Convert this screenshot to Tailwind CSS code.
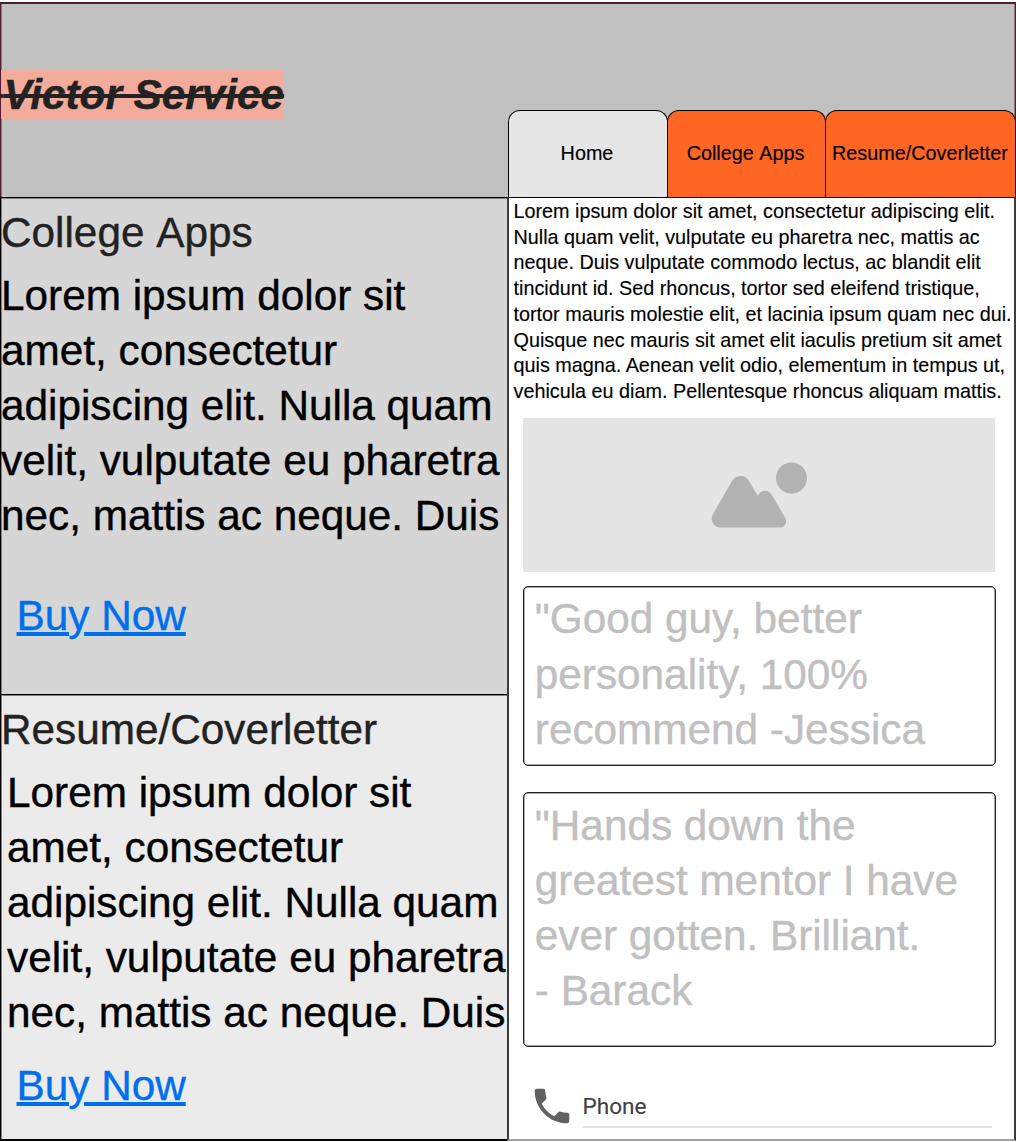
<!DOCTYPE html>
<html lang="en">
<head>
<meta charset="utf-8">
<title>Victor Service</title>
<script src="https://cdn.jsdelivr.net/npm/@tailwindcss/browser@4"></script>
</head>
<body class="w-[1016px] h-[1142px] overflow-hidden bg-white pt-[2px] font-['Liberation_Sans',Arial,sans-serif] text-[42.3px] leading-[55px] text-black [-webkit-text-stroke:0.4px]">
<header class="flex h-[195px] items-start justify-between border-x border-t-2 border-[#4f1c2e] bg-[#c0c0c0] shadow-[inset_1px_0_0_#8f7880,inset_-1px_0_0_#8f7880]">
  <h1 class="mt-[66px] h-[49px] w-[282px] whitespace-nowrap bg-[#f3ac9b] font-bold italic leading-[49px] text-[#222] line-through decoration-[4px]"><span class="tracking-[-9.2px]">&nbsp;</span>Victor Service</h1>
  <nav class="-mr-px mt-[106px] flex h-[87px] text-[19.8px] leading-[84px] [-webkit-text-stroke:0.15px]">
    <a class="w-[160px] rounded-t-[12px] border border-b-0 border-black bg-[#e6e6e6] pr-[2px] text-center">Home</a>
    <a class="-ml-px w-[159px] rounded-t-[12px] border border-b-0 border-black bg-[#ff6624] pr-[2px] text-center [font-kerning:none]">College Apps</a>
    <a class="-ml-px w-[191px] rounded-t-[12px] border border-b-0 border-black bg-[#ff6624] pr-px text-center">Resume/Coverletter</a>
  </nav>
</header>
<main class="flex h-[944px]">
  <div class="flex w-[507px] flex-col">
    <section class="h-[497px] whitespace-nowrap border-l border-t border-black bg-[#d6d6d6] pt-[7px] shadow-[inset_1px_1px_0_#808080]">
      <h2 class="text-[#222] [font-kerning:none]">College Apps</h2>
      <p class="mt-[8px]">Lorem ipsum dolor sit<br>amet, consectetur<br>adipiscing elit. Nulla quam<br>velit, vulputate eu pharetra<br>nec, mattis ac neque. Duis</p>
      <a class="ml-[15.500px] mt-[45px] block text-[#006fee] underline decoration-[4px] underline-offset-[2px]">Buy Now</a>
    </section>
    <section class="h-[447px] whitespace-nowrap border-b-2 border-l border-t border-black bg-[#ebebeb] pt-[7px] shadow-[inset_1px_1px_0_#808080]">
      <h2 class="text-[#222]">Resume/Coverletter</h2>
      <p class="ml-[6px] mt-[8px]">Lorem ipsum dolor sit<br>amet, consectetur<br>adipiscing elit. Nulla quam<br>velit, vulputate eu pharetra<br>nec, mattis ac neque. Duis</p>
      <a class="ml-[15.500px] mt-[18px] block text-[#006fee] underline decoration-[4px] underline-offset-[2px]">Buy Now</a>
    </section>
  </div>
  <div class="flex w-[509px] flex-col border-2 border-t border-x-[#3c3c3c] border-b-[#a0a0a0] border-t-black bg-white">
    <p class="ml-[4.500px] h-[220px] whitespace-nowrap pt-[1px] text-[19.8px] leading-[25.7px] [-webkit-text-stroke:0.15px]">Lorem ipsum dolor sit amet, consectetur adipiscing elit.<br>Nulla quam velit, vulputate eu pharetra nec, mattis ac<br>neque. Duis vulputate commodo lectus, ac blandit elit<br>tincidunt id. Sed rhoncus, tortor sed eleifend tristique,<br>tortor mauris molestie elit, et lacinia ipsum quam nec dui.<br>Quisque nec mauris sit amet elit iaculis pretium sit amet<br>quis magna. Aenean velit odio, elementum in tempus ut,<br>vehicula eu diam. Pellentesque rhoncus aliquam mattis.</p>
    <div class="ml-[14px] h-[154px] w-[472px] shrink-0 bg-[#e5e5e5]">
      <svg class="h-[154px] w-[472px]" viewBox="523 418 472 154" fill="#b2b2b2"><circle cx="791.5" cy="478" r="15.5"/><path d="M732 481Q735 476 740.700 476Q746 476 749 481L757.700 496Q760.500 490.800 765 490.800Q769.500 490.800 772.500 496L785 517.500Q788 523.500 783.500 526.500Q782 527.500 779 527.500H721Q714.500 527 712.500 522.500Q710.500 518.500 713.500 513Z"/></svg>
    </div>
    <blockquote class="ml-[14px] mt-[14px] h-[180px] w-[473px] shrink-0 whitespace-nowrap rounded-[5px] border border-[#222] pl-[10.800px] pt-[4px] leading-[55.5px] text-[#c0c0c0] shadow-[inset_0_0_0_0.5px_#555]">"Good guy, better<br>personality, 100%<br>recommend -Jessica</blockquote>
    <blockquote class="ml-[14px] mt-[26px] h-[255px] w-[473px] shrink-0 whitespace-nowrap rounded-[5px] border border-[#222] pl-[10.800px] pt-[5px] text-[#c0c0c0] shadow-[inset_0_0_0_0.5px_#555]">"Hands down the<br>greatest mentor I have<br>ever gotten. Brilliant.<br>- Barack</blockquote>
    <label class="ml-[20px] mt-[36px] flex items-start">
      <svg class="h-[46px] w-[46px]" viewBox="0 0 24 24" fill="#616161"><path d="M6.620 10.790c1.440 2.830 3.760 5.140 6.590 6.590l2.200-2.200c.27-.27.67-.36 1.020-.24 1.120.37 2.330.57 3.570.57.55 0 1 .45 1 1V20c0 .55-.45 1-1 1-9.390 0-17-7.610-17-17 0-.55.45-1 1-1h3.500c.55 0 1 .45 1 1 0 1.250.2 2.450.57 3.570.11.35.03.74-.25 1.020l-2.200 2.200z"/></svg>
      <span class="ml-[7px] mt-[2px] h-[43px] w-[410px] border-b-2 border-[#e6e6e6] pl-[0.500px] font-[Roboto,sans-serif] text-[22.6px] leading-[43px] text-[#424242] [-webkit-text-stroke:0.15px]">Phone</span>
    </label>
  </div>
</main>
</body>
</html>
